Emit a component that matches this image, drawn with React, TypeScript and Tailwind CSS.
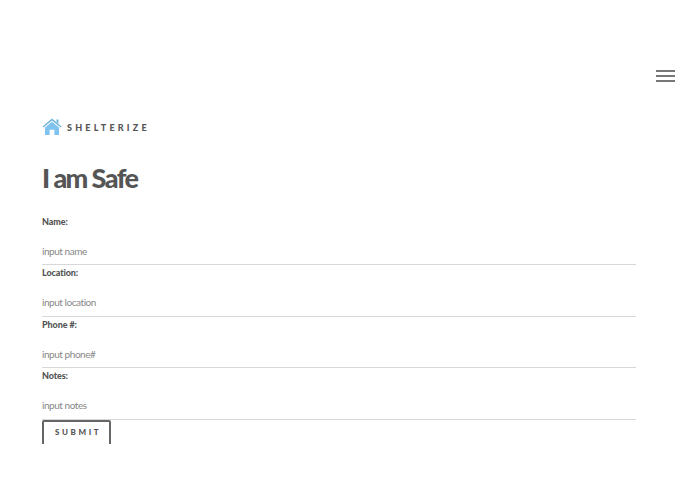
const fields = [
  { label: "Name:", placeholder: "input name" },
  { label: "Location:", placeholder: "input location" },
  { label: "Phone #:", placeholder: "input phone#" },
  { label: "Notes:", placeholder: "input notes" },
];

function HouseLogo() {
  return (
    <svg width="20" height="18" viewBox="0 0 20 18">
      <path d="M10 0.5 L19.5 8.5 L18.6 9.6 L10 2.6 L1.4 9.6 L0.5 8.5 Z" fill="#6fb3dc" />
      <path d="M14.5 1.5 H16.5 V5.5 L14.5 4 Z" fill="#6fb3dc" />
      <path d="M10 3.8 L17 9.4 V17 H12.4 V11.8 H7.6 V17 H3 V9.4 Z" fill="#7fc4ee" />
    </svg>
  );
}

export default function App() {
  return (
    <div className="relative w-[695px] h-[494px] bg-white overflow-hidden font-['Lato',sans-serif] text-[#555]">
      {/* Menu */}
      <div className="absolute top-[70px] left-[656px] w-[19px] flex flex-col gap-[3px]">
        <div className="h-[2px] bg-[#777]" />
        <div className="h-[2px] bg-[#777]" />
        <div className="h-[2px] bg-[#777]" />
      </div>

      <div className="h-[444px] overflow-hidden pt-[118px] pl-[42px] w-[636px]">
        {/* Logo */}
        <div className="flex items-center h-[18px]">
          <HouseLogo />
          <span className="ml-[5px] text-[9px] font-black tracking-[3.2px] text-[#555] leading-none">
            SHELTERIZE
          </span>
        </div>

        <h1 className="mt-[24px] h-[36px] text-[27px] leading-[36px] font-black tracking-[-1.6px] text-[#555]">
          I am Safe
        </h1>

        {/* Form */}
        <form className="mt-[17.5px]">
          {fields.map((field) => (
            <div key={field.label} className="h-[51.5px]">
              <label className="block h-[22px] pt-[2px] text-[9px] leading-[12px] font-black tracking-[-0.1px] text-[#555]">
                {field.label}
              </label>
              <div className="h-[29.5px] pt-[8px] border-b border-[#d8d8d8] text-[10px] leading-[14px] tracking-[-0.45px] text-[#888]">
                {field.placeholder}
              </div>
            </div>
          ))}
          <button
            type="button"
            className="block w-[69px] h-[30px] border-2 border-[#666] rounded-[2px] text-left pl-[11px] pb-[6px] text-[8px] leading-[12px] font-black tracking-[2.6px] text-[#555]"
          >
            SUBMIT
          </button>
        </form>
      </div>
    </div>
  );
}
